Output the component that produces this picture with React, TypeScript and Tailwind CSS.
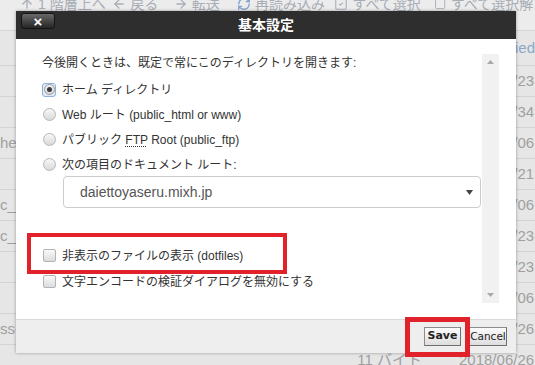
import { ArrowUp, ArrowLeft, ArrowRight, RefreshCw, SquareCheck, Square } from "lucide-react";

const rows = [
  { name: "", size: "", date: "2018/06/23" },
  { name: "", size: "", date: "2018/06/34" },
  { name: "he", size: "", date: "2018/06/06" },
  { name: "", size: "", date: "2018/06/21" },
  { name: "c_ftp", size: "", date: "2018/06/06" },
  { name: "c_html", size: "", date: "2018/06/23" },
  { name: "", size: "", date: "2018/06/23" },
  { name: "", size: "", date: "2018/06/06" },
  { name: "ss-l", size: "", date: "2018/06/26" },
  { name: "", size: "11 バイト", date: "2018/06/26" },
];

function Radio({ checked = false }: { checked?: boolean }) {
  if (checked) {
    return (
      <span className="flex h-[14px] w-[14px] items-center justify-center rounded-[3px] border border-[#8db0e0] bg-[#e1eaf7]">
        <span className="flex h-[11px] w-[11px] items-center justify-center rounded-full border border-[#9c9c9c] bg-gradient-to-b from-[#f6f6f6] to-[#d6d6d6]">
          <span className="h-[5px] w-[5px] rounded-full bg-[#3a3a3a]" />
        </span>
      </span>
    );
  }
  return (
    <span className="ml-[1px] h-[13px] w-[13px] rounded-full border border-[#b6b6b6] bg-gradient-to-b from-[#f8f8f8] to-[#d9d9d9]" />
  );
}

function Checkbox() {
  return (
    <span className="ml-[1px] h-[13px] w-[13px] rounded-[2px] border border-[#b3b3b3] bg-gradient-to-b from-[#f9f9f9] to-[#dcdcdc]" />
  );
}

function Option({ control, children }: { control: React.ReactNode; children: React.ReactNode }) {
  return (
    <div className="flex h-[25px] items-center">
      <span className="flex w-[20px] items-center">{control}</span>
      <span className="text-[12px] leading-[16px] text-[#333]">{children}</span>
    </div>
  );
}

function Toolbar() {
  const item = "flex items-start gap-[4px] text-[14px] leading-[14px] text-[#a7adb6]";
  return (
    <div className="flex h-[31px] border-b border-[#d6d6d6] bg-[#ececec] pl-[20px]">
      <div className={`${item} -mt-[3px] w-[105px]`}>
        <ArrowUp size={14} strokeWidth={2.2} />
        <span>1 階層上へ</span>
      </div>
      <div className={`${item} -mt-[3px] w-[70px]`}>
        <ArrowLeft size={14} strokeWidth={2.2} />
        <span>戻る</span>
      </div>
      <div className={`${item} -mt-[3px] w-[72px]`}>
        <ArrowRight size={14} strokeWidth={2.2} />
        <span>転送</span>
      </div>
      <div className={`${item} -mt-[3px] w-[111px]`}>
        <RefreshCw size={14} strokeWidth={2.4} className="text-[#86a3cc]" />
        <span>再読み込み</span>
      </div>
      <div className={`${item} -mt-[3px] w-[114px]`}>
        <SquareCheck size={14} strokeWidth={1.8} />
        <span>すべて選択</span>
      </div>
      <div className={`${item} -mt-[3px]`}>
        <Square size={14} strokeWidth={1.8} />
        <span>すべて選択解除</span>
      </div>
    </div>
  );
}

function FileTable() {
  return (
    <div className="text-[15px] text-[#a0a0a0]">
      <div className="flex h-[35px] items-center border-b border-[#d3d3d3]">
        <span className="w-[459px]" />
        <span className="whitespace-nowrap text-[#8ca6c8]">Last Modified</span>
      </div>
      {rows.map((r, i) => (
        <div key={i} className="flex h-[31px] items-center whitespace-nowrap border-b border-[#d3d3d3]">
          <span className="w-[330px] overflow-hidden">{r.name}</span>
          <span className="w-[92px] text-right">{r.size}</span>
          <span className="ml-[37px]">{r.date}</span>
        </div>
      ))}
    </div>
  );
}

function Dialog() {
  return (
    <div className="absolute left-[16px] top-[11px] flex h-[342px] w-[500px] flex-col bg-white shadow-[0_0_3px_rgba(0,0,0,0.35)]">
      <div className="relative flex h-[28px] items-center justify-center bg-[#2e2e2e]">
        <button className="absolute left-[5px] top-[2px] flex h-[16px] w-[34px] items-center justify-center rounded-[3px] border border-[#151515] bg-gradient-to-b from-[#6a6a6a] to-[#262626] text-[15px] font-bold leading-none text-white">
          ×
        </button>
        <span className="text-[14px] font-bold text-white">基本設定</span>
      </div>

      <div className="flex h-[280px] pl-[26px] pr-[17px] pt-[15px] pb-[16px]">
        <div className="flex-1">
          <div className="flex h-[18px] items-center text-[12px] text-[#333]">
            今後開くときは、既定で常にこのディレクトリを開きます:
          </div>
          <div className="mt-[5px]">
            <Option control={<Radio checked />}>ホーム ディレクトリ</Option>
            <Option control={<Radio />}>Web ルート (public_html or www)</Option>
            <Option control={<Radio />}>
              パブリック <abbr className="underline decoration-dotted underline-offset-2">FTP</abbr> Root (public_ftp)
            </Option>
            <Option control={<Radio />}>次の項目のドキュメント ルート:</Option>
          </div>
          <div className="ml-[21px] -mt-[1px] flex h-[32px] w-[418px] items-center justify-between rounded-[4px] border border-[#cccccc] pl-[16px] pr-[7px] text-[14px] text-[#555]">
            <span>daiettoyaseru.mixh.jp</span>
            <svg width="7" height="5" viewBox="0 0 7 5">
              <path d="M0 0h7L3.5 5z" fill="#444" />
            </svg>
          </div>
          <div className="mt-[35px]">
            <div className="h-[26px]">
              <Option control={<Checkbox />}>非表示のファイルの表示 (dotfiles)</Option>
            </div>
            <div className="h-[26px]">
              <Option control={<Checkbox />}>文字エンコードの検証ダイアログを無効にする</Option>
            </div>
          </div>
        </div>
        <div className="flex w-[17px] flex-col items-center justify-between bg-[#f1f1f1] py-[6px]">
          <svg width="7" height="4" viewBox="0 0 7 4">
            <path d="M3.5 0L7 4H0z" fill="#a8a8a8" />
          </svg>
          <svg width="7" height="4" viewBox="0 0 7 4">
            <path d="M0 0h7L3.5 4z" fill="#a8a8a8" />
          </svg>
        </div>
      </div>

      <div className="flex flex-1 items-center justify-end gap-[8px] border-t border-[#dadada] bg-[#eeeeee] pr-[9px]">
        <button className="flex h-[19px] w-[37px] items-center justify-center border border-[#8c8c8c] border-b-[#6f6f6f] border-r-[#6f6f6f] bg-gradient-to-b from-[#fbfbfb] to-[#dedede] font-['DejaVu_Sans',sans-serif] text-[11px] font-bold text-[#222]">
          Save
        </button>
        <button className="flex h-[19px] w-[38px] items-center justify-center border border-[#8c8c8c] border-b-[#6f6f6f] border-r-[#6f6f6f] bg-gradient-to-b from-[#fbfbfb] to-[#dedede] font-['DejaVu_Sans',sans-serif] text-[10.5px] text-[#222]">
          Cancel
        </button>
      </div>
    </div>
  );
}

export default function App() {
  return (
    <div className="relative h-[365px] w-[535px] overflow-hidden bg-[#e6e6e6] font-['Liberation_Sans','Noto_Sans_CJK_JP',sans-serif]">
      <Toolbar />
      <FileTable />
      <Dialog />
      <div className="absolute left-[27px] top-[233px] h-[41px] w-[260px] border-[4px] border-[#e1222b]" />
      <div className="absolute left-[405px] top-[317px] h-[40px] w-[65px] border-[5px] border-[#e1222b]" />
    </div>
  );
}
